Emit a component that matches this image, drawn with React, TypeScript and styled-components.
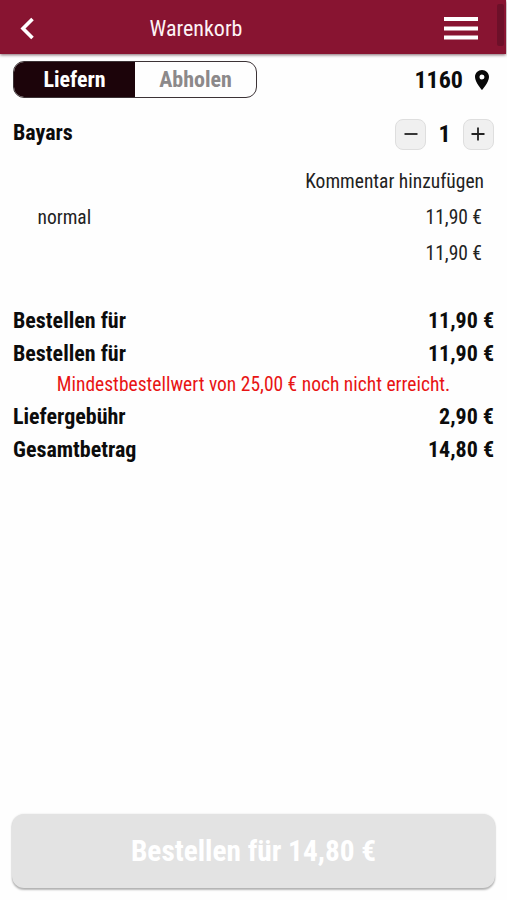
import React from "react";
import styled, { createGlobalStyle } from "styled-components";

const GlobalStyle = createGlobalStyle`
  * { box-sizing: border-box; }
  body {
    margin: 0;
    background: #fefefe;
    color: #0c0c0c;
    font-family: "Roboto Condensed", Roboto, sans-serif;
    font-stretch: 75%;
    overflow: hidden;
  }
  button { font: inherit; font-stretch: inherit; color: inherit; padding: 0; }
`;

const Page = styled.div`
  display: flex;
  flex-direction: column;
  height: 900px;
`;

const Header = styled.header`
  display: flex;
  align-items: center;
  justify-content: space-between;
  height: 54px;
  width: 506px;
  flex: none;
  padding: 2px 2px 0 20px;
  background: #881431;
  box-shadow: 0 1px 3px rgba(60, 20, 30, 0.65);
`;

const Title = styled.h1`
  margin: 0 0 0 -87px;
  font-size: 22px;
  font-weight: 400;
  color: #fdf3f5;
`;

const HeaderEnd = styled.div`
  display: flex;
  align-items: center;
  gap: 19px;
`;

const IconButton = styled.button`
  display: flex;
  border: 0;
  background: none;
`;

const ScrollThumb = styled.div`
  width: 7px;
  height: 42px;
  margin-top: -6px;
  border-radius: 2px;
  background: #6d1029;
`;

const Body = styled.main`
  display: flex;
  flex-direction: column;
  flex: 1;
  padding: 7px 13px 12px;
`;

const Bar = styled.div`
  display: flex;
  align-items: center;
  justify-content: space-between;
  height: 36px;
`;

const Toggle = styled.div`
  display: flex;
  width: 244px;
  height: 37px;
  border: 1px solid #3c3336;
  border-radius: 11px;
  overflow: hidden;
`;

const ToggleOption = styled.button<{ $active?: boolean }>`
  flex: 1;
  border: 0;
  font-size: 22px;
  font-weight: 700;
  background: ${(p) => (p.$active ? "#1c040a" : "transparent")};
  color: ${(p) => (p.$active ? "#ffffff" : "#8c898a")};
`;

const Postcode = styled.div`
  display: flex;
  align-items: center;
  gap: 12px;
  padding: 1px 5px 0 0;
  font-size: 24px;
  font-weight: 700;
`;

const ItemHead = styled.div`
  display: flex;
  align-items: center;
  justify-content: space-between;
  margin: 19px 0 11px;
  height: 36px;
  font-weight: 700;
`;

const ItemName = styled.span`
  padding-bottom: 3px;
  font-size: 22px;
`;

const Stepper = styled.div`
  display: flex;
  align-items: center;
  justify-content: space-between;
  width: 99px;
  font-size: 24px;
`;

const StepButton = styled.button`
  display: flex;
  align-items: center;
  justify-content: center;
  width: 31px;
  height: 31px;
  border: 1px solid #dedede;
  border-radius: 8px;
  background: #f0f0f0;
`;

const DetailRow = styled.div<{ $inset: number }>`
  display: flex;
  align-items: center;
  justify-content: space-between;
  height: 36px;
  padding: 0 ${(p) => p.$inset}px 0 24.5px;
  font-size: 19.5px;
  color: #222;
`;

const Totals = styled.section`
  margin-top: 33px;
`;

const TotalRow = styled.div`
  display: flex;
  align-items: center;
  justify-content: space-between;
  height: 33px;
  font-size: 22px;
  font-weight: 700;
`;

const Warning = styled.p`
  margin: 0;
  height: 30px;
  line-height: 30px;
  font-size: 19.5px;
  text-align: center;
  color: #e81414;
`;

const OrderButton = styled.button`
  height: 74px;
  margin: auto -1px 0;
  border: 0;
  border-radius: 12px;
  background: #e3e3e3;
  box-shadow: 0 2px 2px rgba(0, 0, 0, 0.28), 0 0 2px rgba(0, 0, 0, 0.12);
  font-size: 29.3px;
  font-weight: 700;
  color: #fff;
`;

export default function App() {
  return (
    <Page>
      <GlobalStyle />
      <Header>
        <IconButton aria-label="Zurück">
          <svg width="15" height="23" viewBox="0 0 15 23">
            <path d="M12.5 2 L3 11.5 L12.5 21" fill="none" stroke="#fff" strokeWidth="3.6" />
          </svg>
        </IconButton>
        <Title>Warenkorb</Title>
        <HeaderEnd>
          <IconButton aria-label="Menü">
            <svg width="34" height="23" viewBox="0 0 34 23">
              <path d="M0 2H34M0 11.5H34M0 20.5H34" stroke="#fff" strokeWidth="4" />
            </svg>
          </IconButton>
          <ScrollThumb />
        </HeaderEnd>
      </Header>
      <Body>
        <Bar>
          <Toggle>
            <ToggleOption $active>Liefern</ToggleOption>
            <ToggleOption>Abholen</ToggleOption>
          </Toggle>
          <Postcode>
            <span>1160</span>
            <svg width="14" height="20" viewBox="5 2 14 20">
              <path fill="#080808" d="M12 2C8.13 2 5 5.13 5 9c0 5.25 7 13 7 13s7-7.75 7-13c0-3.87-3.13-7-7-7zm0 9.5a2.5 2.5 0 1 1 0-5 2.5 2.5 0 0 1 0 5z" />
            </svg>
          </Postcode>
        </Bar>
        <ItemHead>
          <ItemName>Bayars</ItemName>
          <Stepper>
            <StepButton aria-label="Weniger">
              <svg width="14" height="14" viewBox="0 0 14 14">
                <path d="M0.5 7H13.5" stroke="#222" strokeWidth="1.8" />
              </svg>
            </StepButton>
            <span>1</span>
            <StepButton aria-label="Mehr">
              <svg width="14" height="14" viewBox="0 0 14 14">
                <path d="M0.5 7H13.5M7 0.5V13.5" stroke="#222" strokeWidth="1.8" />
              </svg>
            </StepButton>
          </Stepper>
        </ItemHead>
        <DetailRow $inset={10}><span /><span>Kommentar hinzufügen</span></DetailRow>
        <DetailRow $inset={12}><span>normal</span><span>11,90 €</span></DetailRow>
        <DetailRow $inset={12}><span /><span>11,90 €</span></DetailRow>
        <Totals>
          <TotalRow><span>Bestellen für</span><span>11,90 €</span></TotalRow>
          <TotalRow><span>Bestellen für</span><span>11,90 €</span></TotalRow>
          <Warning>Mindestbestellwert von 25,00 € noch nicht erreicht.</Warning>
          <TotalRow><span>Liefergebühr</span><span>2,90 €</span></TotalRow>
          <TotalRow><span>Gesamtbetrag</span><span>14,80 €</span></TotalRow>
        </Totals>
        <OrderButton>Bestellen für 14,80 €</OrderButton>
      </Body>
    </Page>
  );
}
